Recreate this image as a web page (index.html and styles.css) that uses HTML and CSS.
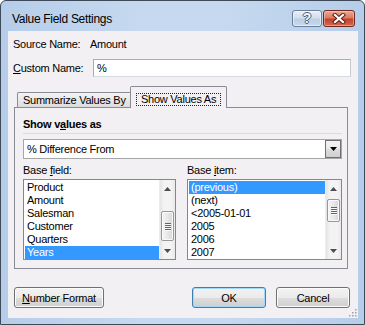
FILE: index.html
```html
<!DOCTYPE html>
<html>
<head>
<meta charset="utf-8">
<link rel="stylesheet" href="styles.css">
</head>
<body>
<div class="window">
  <div class="titlebar">
    <span class="title">Value Field Settings</span>
    <div class="caption-btns">
      <div class="cbtn help"><span class="q">?</span></div>
      <div class="cbtn close">
        <svg width="14" height="11" viewBox="0 0 14 11">
          <path d="M3 2 L11 9 M11 2 L3 9" stroke="#5a2419" stroke-width="4.2" stroke-linecap="square" fill="none"/>
          <path d="M3 2 L11 9 M11 2 L3 9" stroke="#ffffff" stroke-width="2.2" stroke-linecap="square" fill="none"/>
        </svg>
      </div>
    </div>
  </div>
  <div class="client">
    <div class="row-src">
      <span>Source Name:</span>
      <span>Amount</span>
    </div>
    <div class="row-name">
      <span><u>C</u>ustom Name:</span>
      <div class="input">%</div>
    </div>
    <div class="tabs">
      <div class="tab">Summarize Values By</div>
      <div class="tab active"><span class="focus">Show Values As</span></div>
    </div>
    <div class="panel">
      <div class="heading">Show v<u>a</u>lues as</div>
      <div class="sep"></div>
      <div class="combo">
        <span class="combo-text">% Difference From</span>
        <div class="dd">
          <svg width="7" height="4" viewBox="0 0 7 4"><path d="M0 0 H7 L3.5 4 Z" fill="#000"/></svg>
        </div>
      </div>
      <div class="lists">
        <div class="col">
          <div class="lbl">Base <u>f</u>ield:</div>
          <div class="listbox">
            <div class="items">
              <div class="item">Product</div>
              <div class="item">Amount</div>
              <div class="item">Salesman</div>
              <div class="item">Customer</div>
              <div class="item">Quarters</div>
              <div class="item sel">Years</div>
            </div>
            <div class="sb">
              <div class="sb-btn"><svg width="7" height="4" viewBox="0 0 7 4"><path d="M0 4 H7 L3.5 0 Z" fill="#4d4d4d"/></svg></div>
              <div class="sb-track">
                <div class="thumb thumb-left"><i></i><i></i><i></i><i></i></div>
              </div>
              <div class="sb-btn"><svg width="7" height="4" viewBox="0 0 7 4"><path d="M0 0 H7 L3.5 4 Z" fill="#4d4d4d"/></svg></div>
            </div>
          </div>
        </div>
        <div class="col">
          <div class="lbl">Base <u>i</u>tem:</div>
          <div class="listbox">
            <div class="items">
              <div class="item sel">(previous)</div>
              <div class="item">(next)</div>
              <div class="item">&lt;2005-01-01</div>
              <div class="item">2005</div>
              <div class="item">2006</div>
              <div class="item">2007</div>
            </div>
            <div class="sb">
              <div class="sb-btn"><svg width="7" height="4" viewBox="0 0 7 4"><path d="M0 4 H7 L3.5 0 Z" fill="#4d4d4d"/></svg></div>
              <div class="sb-track">
                <div class="thumb thumb-right"><i></i><i></i><i></i><i></i></div>
              </div>
              <div class="sb-btn"><svg width="7" height="4" viewBox="0 0 7 4"><path d="M0 0 H7 L3.5 4 Z" fill="#4d4d4d"/></svg></div>
            </div>
          </div>
        </div>
      </div>
    </div>
    <div class="buttons">
      <div class="btn numfmt"><u>N</u>umber Format</div>
      <div class="btn ok">OK</div>
      <div class="btn cancel">Cancel</div>
    </div>
    <svg class="grip" width="10" height="10" viewBox="0 0 10 10">
      <g fill="#a0a0a0">
        <rect x="8" y="2" width="1.5" height="1.5"/>
        <rect x="5" y="5" width="1.5" height="1.5"/>
        <rect x="8" y="5" width="1.5" height="1.5"/>
        <rect x="2" y="8" width="1.5" height="1.5"/>
        <rect x="5" y="8" width="1.5" height="1.5"/>
        <rect x="8" y="8" width="1.5" height="1.5"/>
      </g>
    </svg>
  </div>
</div>
</body>
</html>
```

FILE: styles.css
```css
* { box-sizing: border-box; }
html, body { margin: 0; padding: 0; background: #ffffff; }
body {
  font-family: "Liberation Sans", Arial, sans-serif;
  font-size: 11px;
  letter-spacing: -0.25px;
  color: #000;
}
u { text-decoration: underline; text-underline-offset: 1px; }

.window {
  width: 365px;
  height: 325px;
  border: 1px solid #3f4a58;
  border-radius: 6px 6px 0 0;
  background: linear-gradient(90deg, #b6cde9 0%, #c6d9f0 40%, #c6d9f0 60%, #b6cde9 100%);
  padding: 0 6px 6px 7px;
  display: flex;
  flex-direction: column;
}

.titlebar {
  height: 30px;
  display: flex;
  align-items: flex-start;
  flex-shrink: 0;
}
.title {
  padding: 10px 0 0 4px;
  line-height: 16px;
  font-size: 12px;
  letter-spacing: -0.3px;
  flex: 1;
}
.caption-btns {
  display: flex;
  gap: 1px;
  margin: 9px 3px 0 0;
}
.cbtn {
  height: 17px;
  border-radius: 3px;
  display: flex;
  align-items: center;
  justify-content: center;
}
.help {
  width: 30px;
  border: 1px solid #6a7f9c;
  background: linear-gradient(180deg, #e8eef7 0%, #d3dfee 45%, #bccee5 55%, #c9d9ec 100%);
  box-shadow: inset 0 0 0 1px rgba(255,255,255,0.5);
}
.q {
  font-family: "Liberation Sans", Arial, sans-serif;
  font-weight: bold;
  font-size: 14px;
  line-height: 15px;
  color: #f4f6fa;
  text-shadow: -1px 0 #4d5f78, 1px 0 #4d5f78, 0 -1px #4d5f78, 0 1px #4d5f78;
}
.close {
  width: 32px;
  border: 1px solid #6e2a1e;
  background: linear-gradient(180deg, #eaa899 0%, #dd7a62 45%, #c7402a 55%, #d36a4f 100%);
  box-shadow: inset 0 0 0 1px rgba(255,220,210,0.45);
}

.client {
  flex: 1;
  background: #f3f0f3;
  position: relative;
  display: flex;
  flex-direction: column;
}

.row-src {
  margin-top: 6px;
  height: 14px;
  line-height: 14px;
  padding-left: 5px;
  display: grid;
  grid-template-columns: 77px auto;
}
.row-name {
  margin-top: 8px;
  height: 18px;
  padding: 0 7px 0 5px;
  display: grid;
  grid-template-columns: 80px 1fr;
  align-items: center;
}
.input {
  height: 18px;
  border: 1px solid #abadb3;
  border-right-color: #c7cbd2;
  border-bottom-color: #d5d9e0;
  background: #fff;
  line-height: 16px;
  padding-left: 3px;
}

.tabs {
  margin-top: 9px;
  height: 21px;
  padding-left: 9px;
  display: flex;
  align-items: flex-end;
  flex-shrink: 0;
}
.tab {
  height: 15px;
  width: 113px;
  border: 1px solid #898c95;
  border-right: 0;
  border-bottom: 0;
  border-radius: 2px 0 0 0;
  background: linear-gradient(180deg, #f3f3f3 0%, #e8e8e8 50%, #dcdcdc 100%);
  line-height: 14px;
  padding-left: 5px;
}
.tab.active {
  width: 97px;
  height: 22px;
  margin-bottom: -1px;
  border-right: 1px solid #898c95;
  border-radius: 2px 2px 0 0;
  background: #f3f0f3;
  position: relative;
  z-index: 1;
  padding: 5px 0 0 5px;
}
.focus {
  display: inline-block;
  border: 1px dotted #222;
  height: 13px;
  line-height: 11px;
  padding: 0 4px;
}

.panel {
  margin-left: 6px;
  width: 334px;
  height: 162px;
  border: 1px solid #898c95;
  padding: 9px 5px 0 8px;
  flex-shrink: 0;
}
.heading {
  font-weight: bold;
  height: 14px;
  line-height: 14px;
}
.sep {
  margin-top: 2px;
  height: 1px;
  background: #d7dbe2;
}
.combo {
  margin-top: 5px;
  height: 20px;
  width: 319px;
  border: 1px solid #a7a7a7;
  background: #fff;
  display: flex;
  align-items: center;
}
.combo-text {
  flex: 1;
  padding-left: 3px;
  line-height: 18px;
}
.dd {
  width: 16px;
  height: 18px;
  border: 1px solid #707070;
  background: linear-gradient(180deg, #f2f2f2 0%, #ebebeb 50%, #dddddd 50%, #cfcfcf 100%);
  display: flex;
  align-items: center;
  justify-content: center;
}

.lists {
  margin-top: 4px;
  display: grid;
  grid-template-columns: 153px 155px;
  column-gap: 11px;
}
.lbl {
  height: 14px;
  line-height: 14px;
  margin-bottom: 2px;
}
.listbox {
  height: 81px;
  border: 1px solid #828790;
  background: #fff;
  display: flex;
}
.items {
  flex: 1;
  padding: 1px 0 1px 1px;
}
.item {
  height: 13px;
  line-height: 13px;
  padding-left: 2px;
  white-space: nowrap;
}
.item.sel {
  background: #3399ff;
  color: #fff;
}
.sb {
  width: 16px;
  display: flex;
  flex-direction: column;
  background: linear-gradient(90deg, #e4e4e4 0%, #f3f3f3 25%, #f3f3f3 75%, #e9e9e9 100%);
  border-left: 1px solid #ececec;
}
.sb-btn {
  height: 17px;
  display: flex;
  align-items: center;
  justify-content: center;
}
.sb-track {
  flex: 1;
  padding: 0 1px;
}
.thumb {
  border: 1px solid #979797;
  border-radius: 2px;
  background: linear-gradient(90deg, #f4f4f4 0%, #e8e8e8 50%, #d6d6d6 100%);
  box-shadow: inset 0 0 0 1px #fafafa;
  display: flex;
  flex-direction: column;
  align-items: center;
  justify-content: center;
  gap: 1px;
}
.thumb i {
  display: block;
  width: 6px;
  height: 1px;
  background: #646464;
  box-shadow: 0 1px 0 #f8f8f8;
}
.thumb-left { margin-top: 14px; height: 30px; }
.thumb-right { margin-top: 2px; height: 23px; }

.buttons {
  margin-top: 18px;
  padding: 0 8px 0 6px;
  display: flex;
  gap: 10px;
}
.btn {
  height: 21px;
  border: 1px solid #707070;
  border-radius: 3px;
  background: linear-gradient(180deg, #f2f2f2 0%, #ebebeb 50%, #dddddd 50%, #cfcfcf 100%);
  box-shadow: inset 0 0 0 1px #fcfcfc;
  display: flex;
  align-items: center;
  justify-content: center;
  line-height: 14px;
}
.numfmt { width: 90px; }
.ok {
  width: 74px;
  margin-left: auto;
  border-color: #3c7fb1;
  box-shadow: inset 0 0 0 1px #a3d9f6;
}
.cancel { width: 74px; }

.grip {
  position: absolute;
  right: 1px;
  bottom: 1px;
}
```
